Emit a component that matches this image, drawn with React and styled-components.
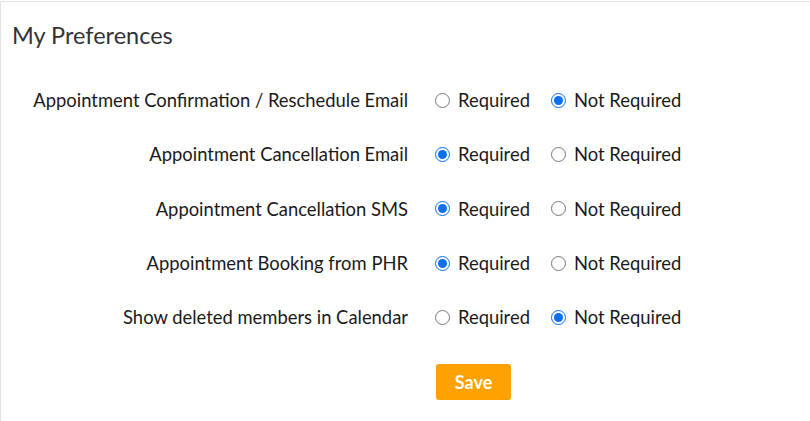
import React, { useState } from 'react';
import styled, { createGlobalStyle } from 'styled-components';

const GlobalStyle = createGlobalStyle`
  body {
    margin: 0;
    background: #ffffff;
    font-family: Lato, "Open Sans", sans-serif;
  }
`;

const Panel = styled.div`
  margin-top: 1px;
  height: 420px;
  box-sizing: border-box;
  border-top: 1px solid #e3e3e3;
  border-left: 1px solid #e3e3e3;
`;

const Title = styled.h2`
  margin: 0;
  padding: 19px 0 0 11px;
  height: 52px;
  box-sizing: border-box;
  font-size: 23.5px;
  font-weight: 400;
  color: #333333;
  line-height: 28px;
`;

const Form = styled.div`
  display: grid;
  grid-template-columns: 407px auto;
  column-gap: 27px;
  grid-auto-rows: 54.3px;
  padding-top: 19px;
`;

const Label = styled.div`
  display: flex;
  align-items: center;
  justify-content: flex-end;
  font-size: 18.4px;
  color: #1a1a1a;
  white-space: nowrap;
`;

const Options = styled.div`
  display: flex;
  align-items: center;
`;

const Option = styled.label`
  display: flex;
  align-items: center;
  gap: 8px;
  width: ${(p) => p.$width}px;
  font-size: 18.4px;
  color: #1a1a1a;
  cursor: pointer;
`;

const Radio = styled.input`
  margin: 0;
  width: 15px;
  height: 15px;
  accent-color: #0b6ff0;
`;

const Actions = styled.div`
  grid-column: 2;
  display: flex;
  align-items: flex-end;
  padding-left: 1px;
`;

const SaveButton = styled.button`
  width: 75px;
  height: 36px;
  margin-bottom: -1px;
  border: none;
  border-radius: 3px;
  background: #ffa100;
  color: #ffffff;
  font-family: Lato, sans-serif;
  font-size: 18px;
  font-weight: 700;
  cursor: pointer;
`;

const prefs = [
  { key: 'confirm', label: 'Appointment Confirmation / Reschedule Email', value: 'no' },
  { key: 'cancelEmail', label: 'Appointment Cancellation Email', value: 'yes' },
  { key: 'cancelSms', label: 'Appointment Cancellation SMS', value: 'yes' },
  { key: 'booking', label: 'Appointment Booking from PHR', value: 'yes' },
  { key: 'deleted', label: 'Show deleted members in Calendar', value: 'no' },
];

export default function App() {
  const [values, setValues] = useState(
    prefs.reduce((res, p) => ({ ...res, [p.key]: p.value }), {})
  );

  const set = (key, value) => setValues((v) => ({ ...v, [key]: value }));

  return (
    <>
      <GlobalStyle />
      <Panel>
        <Title>My Preferences</Title>
        <Form>
          {prefs.map((p) => (
            <React.Fragment key={p.key}>
              <Label>{p.label}</Label>
              <Options>
                <Option $width={116}>
                  <Radio
                    type="radio"
                    name={p.key}
                    checked={values[p.key] === 'yes'}
                    onChange={() => set(p.key, 'yes')}
                  />
                  Required
                </Option>
                <Option $width={140}>
                  <Radio
                    type="radio"
                    name={p.key}
                    checked={values[p.key] === 'no'}
                    onChange={() => set(p.key, 'no')}
                  />
                  Not Required
                </Option>
              </Options>
            </React.Fragment>
          ))}
          <Actions>
            <SaveButton>Save</SaveButton>
          </Actions>
        </Form>
      </Panel>
    </>
  );
}
